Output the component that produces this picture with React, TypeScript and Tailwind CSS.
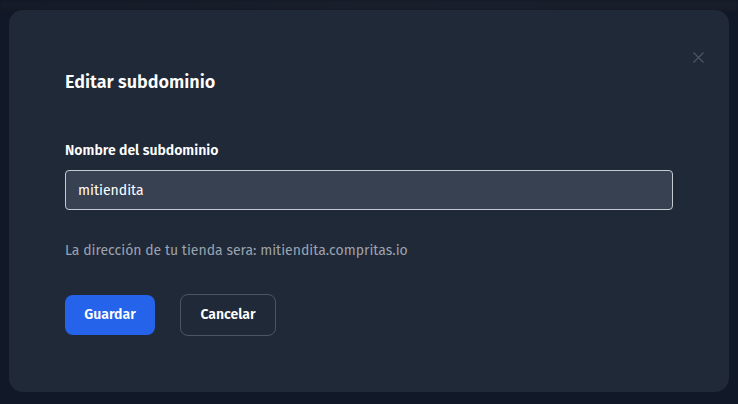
import { useState } from 'react';

export default function App() {
  const [subdomain, setSubdomain] = useState('mitiendita');

  return (
    <div className="relative min-h-[404px] w-full overflow-hidden bg-[#111827] font-['Fira_Sans','Open_Sans',sans-serif]">
      {/* page behind the overlay */}
      <div className="absolute left-0 top-0 h-[10px] w-full bg-gradient-to-r from-[#151b27] via-[#1a1f2b] to-[#191e2a] blur-[2px]" />
      <div className="relative px-[9px] pt-[10px]">
        <div className="relative rounded-[14px] bg-[#1f2937] px-14 pb-14 pt-[58px]">
          <button className="absolute right-[25px] top-[42px] flex text-[#4b5563]" aria-label="Cerrar">
            <svg className="block" width="11" height="11" viewBox="0 0 11 11" fill="none" stroke="currentColor" strokeWidth="1.3">
              <path d="M0.5 0.5 L10.5 10.5 M10.5 0.5 L0.5 10.5" />
            </svg>
          </button>

          <h2 className="text-lg font-semibold leading-7 text-white">Editar subdominio</h2>

          <label className="mt-[45px] block text-sm font-semibold leading-5 text-white">
            Nombre del subdominio
          </label>
          <input
            value={subdomain}
            onChange={(e) => setSubdomain(e.target.value)}
            className="mt-[9px] block h-10 w-full rounded-[4px] border border-[#c4c9d2] bg-[#374151] px-3 text-sm text-white outline-none"
          />

          <p className="mt-[31px] text-sm leading-5 text-[#9ca3af]">
            La dirección de tu tienda sera: {subdomain}.compritas.io
          </p>

          <div className="mt-[33px] flex items-center gap-[25px]">
            <button className="h-10 w-[90px] rounded-lg bg-[#2563eb] text-sm font-semibold text-white">
              Guardar
            </button>
            <button className="h-[42px] w-[96px] rounded-lg border border-[#4b5563] text-sm font-semibold text-white">
              Cancelar
            </button>
          </div>
        </div>
      </div>
    </div>
  );
}
